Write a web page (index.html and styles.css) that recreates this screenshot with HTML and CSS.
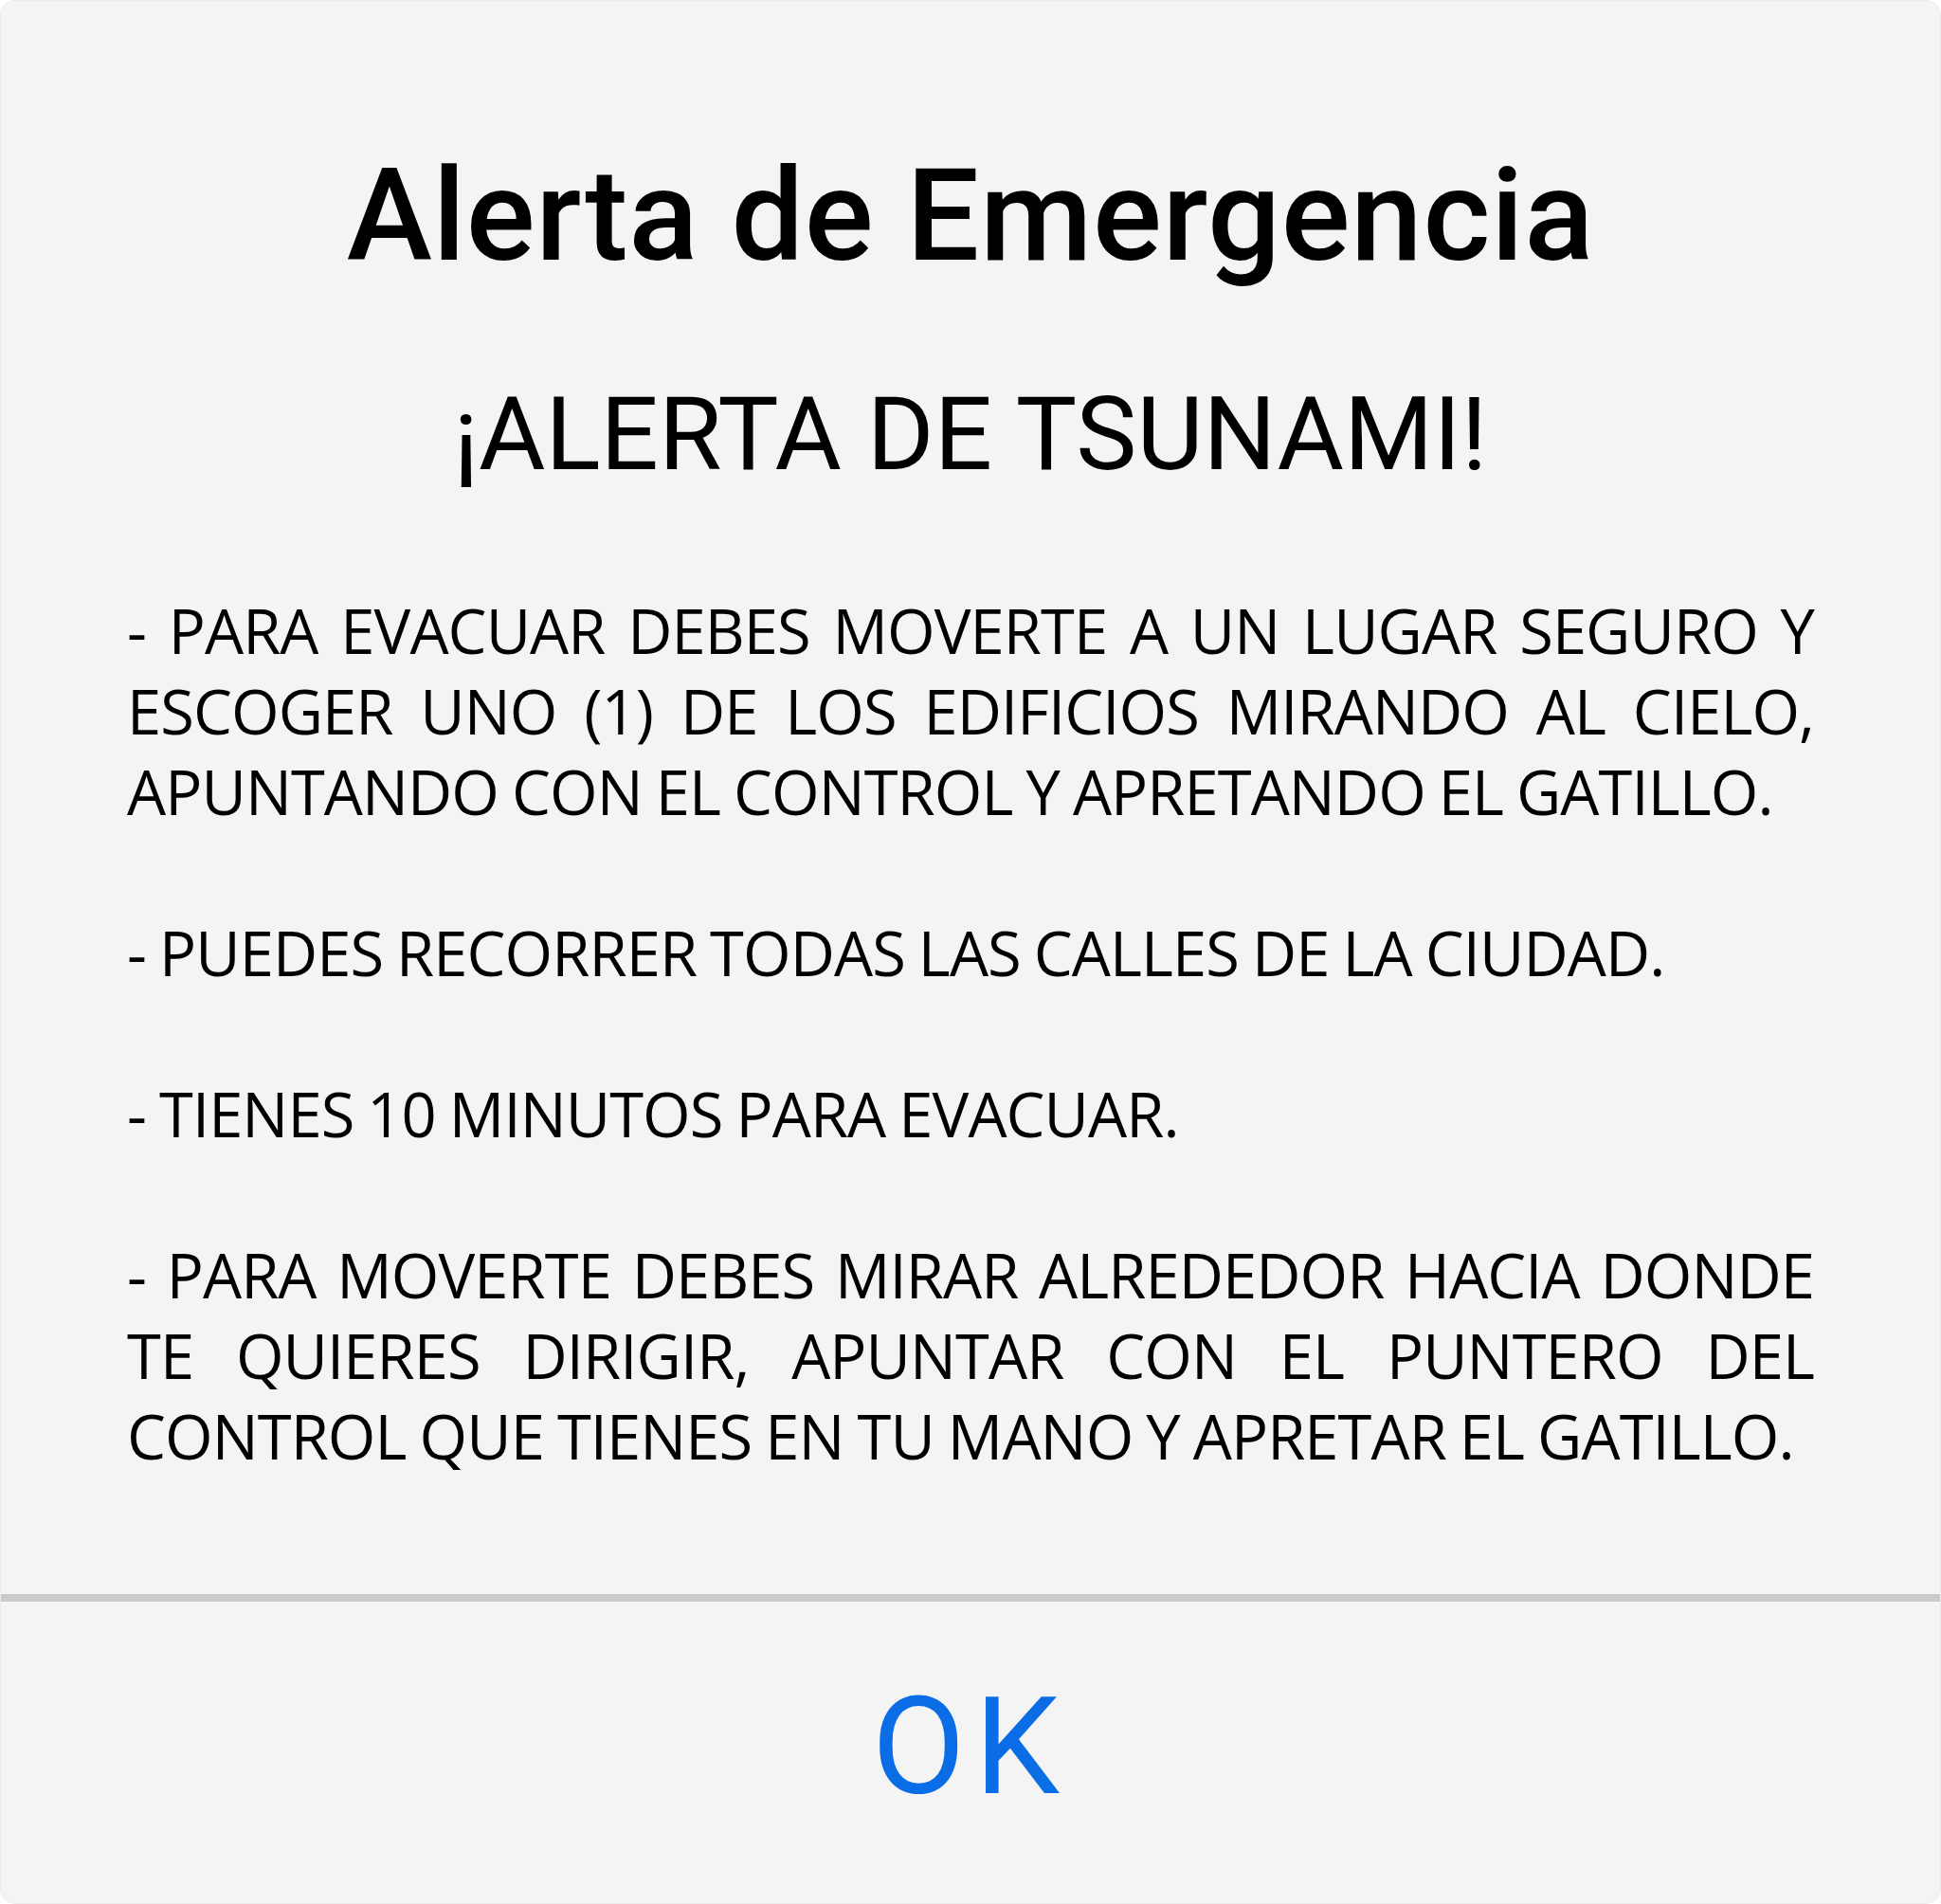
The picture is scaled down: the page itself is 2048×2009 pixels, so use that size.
FILE: index.html
```html
<!DOCTYPE html>
<html lang="es">
<head>
<meta charset="utf-8">
<title>Alerta de Emergencia</title>
<link rel="stylesheet" href="styles.css">
</head>
<body>
<div class="card">
  <div class="content">
    <h1 class="title">Alerta de Emergencia</h1>
    <h2 class="subtitle">¡ALERTA DE TSUNAMI!</h2>
    <p class="message">- PARA EVACUAR DEBES MOVERTE A UN LUGAR SEGURO Y ESCOGER UNO (1) DE LOS EDIFICIOS MIRANDO AL CIELO, APUNTANDO CON EL CONTROL Y APRETANDO EL GATILLO.<br><br>- PUEDES RECORRER TODAS LAS CALLES DE LA CIUDAD.<br><br>- TIENES 10 MINUTOS PARA EVACUAR.<br><br>- PARA MOVERTE DEBES MIRAR ALREDEDOR HACIA DONDE TE QUIERES DIRIGIR, APUNTAR CON EL PUNTERO DEL CONTROL QUE TIENES EN TU MANO Y APRETAR EL GATILLO.</p>
  </div>
  <div class="divider"></div>
  <div class="actions"><span class="ok">OK</span></div>
</div>
</body>
</html>
```
FILE: styles.css
```css
html, body {
  margin: 0;
  padding: 0;
  background: #ffffff;
}
.card {
  box-sizing: border-box;
  width: 2048px;
  height: 2009px;
  background: #f4f4f4;
  border: 1px solid #ececec;
  border-radius: 16px;
  display: flex;
  flex-direction: column;
  overflow: hidden;
}
.content {
  flex: 1;
  display: flex;
  flex-direction: column;
  align-items: center;
  padding: 0 133px;
}
.title {
  margin: 147px 0 0;
  font-family: Roboto, "Liberation Sans", sans-serif;
  font-weight: 500;
  font-size: 136px;
  letter-spacing: 0.6px;
  line-height: 160px;
  color: #000;
}
.subtitle {
  margin: 90px 0 0;
  font-family: Roboto, "Liberation Sans", sans-serif;
  font-weight: 400;
  font-size: 108px;
  line-height: 120px;
  color: #000;
}
.message {
  align-self: stretch;
  margin: 105px 0 0;
  font-family: "Open Sans", "Liberation Sans", sans-serif;
  font-size: 65px;
  letter-spacing: -0.9px;
  word-spacing: -2px;
  line-height: 85px;
  text-align: justify;
  color: #000;
}
.divider {
  height: 8px;
  background: #cacaca;
}
.actions {
  height: 318px;
  display: flex;
  align-items: center;
  justify-content: center;
  padding-bottom: 12px;
  box-sizing: border-box;
}
.ok {
  font-family: Roboto, "Liberation Sans", sans-serif;
  font-size: 143px;
  letter-spacing: 10px;
  line-height: 1;
  color: #0a6de6;
}
```
